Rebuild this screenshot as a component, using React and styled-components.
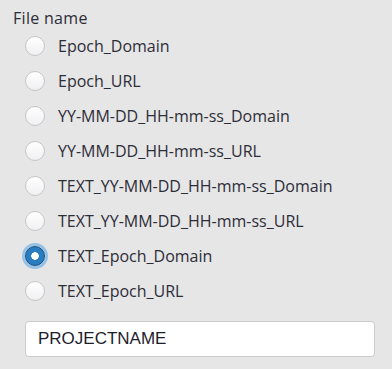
import { useState } from 'react';
import styled, { createGlobalStyle } from 'styled-components';

const GlobalStyle = createGlobalStyle`
  html, body {
    margin: 0;
    padding: 0;
    background: #e6e6e6;
  }
`;

const Panel = styled.div`
  width: 392px;
  height: 369px;
  box-sizing: border-box;
  padding: 8px 17px 0 13px;
  font-family: 'Open Sans', 'Noto Sans', sans-serif;
  color: #2d2d38;
`;

const Title = styled.div`
  font-size: 16px;
  line-height: 20px;
  height: 20px;
  letter-spacing: 0.3px;
`;

const Options = styled.div`
  display: flex;
  flex-direction: column;
  padding-left: 12px;
`;

const Option = styled.label`
  display: flex;
  align-items: center;
  gap: 13px;
  height: 35px;
  font-size: 16px;
  cursor: pointer;
`;

const Radio = styled.input.attrs({ type: 'radio' })`
  appearance: none;
  margin: 0;
  width: 20px;
  height: 20px;
  border-radius: 50%;
  box-sizing: border-box;
  border: 1px solid #c6c6c6;
  background: linear-gradient(#ffffff, #f0f0f3);
  flex-shrink: 0;

  &:checked {
    border: 1px solid #1b4f7a;
    background: radial-gradient(circle, #ffffff 0 3.5px, #2a7cc0 4px);
    box-shadow: 0 0 0 3px #95c2e6;
  }
`;

const NameInput = styled.input`
  display: block;
  margin: 13px 0 0 12px;
  width: 350px;
  height: 36px;
  box-sizing: border-box;
  border: 1px solid #cbcbcb;
  border-radius: 4px;
  background: #fff;
  padding: 0 12px;
  font-family: 'Liberation Sans', Arial, sans-serif;
  font-size: 17px;
  color: #1d1d2b;
  outline: none;
`;

const formats = [
  'Epoch_Domain',
  'Epoch_URL',
  'YY-MM-DD_HH-mm-ss_Domain',
  'YY-MM-DD_HH-mm-ss_URL',
  'TEXT_YY-MM-DD_HH-mm-ss_Domain',
  'TEXT_YY-MM-DD_HH-mm-ss_URL',
  'TEXT_Epoch_Domain',
  'TEXT_Epoch_URL',
];

export default function App() {
  const [format, setFormat] = useState('TEXT_Epoch_Domain');
  const [name, setName] = useState('PROJECTNAME');

  return (
    <Panel>
      <GlobalStyle />
      <Title>File name</Title>
      <Options>
        {formats.map((f) => (
          <Option key={f}>
            <Radio
              name="filename"
              checked={format === f}
              onChange={() => setFormat(f)}
            />
            <span>{f}</span>
          </Option>
        ))}
      </Options>
      <NameInput value={name} onChange={(e) => setName(e.target.value)} />
    </Panel>
  );
}
